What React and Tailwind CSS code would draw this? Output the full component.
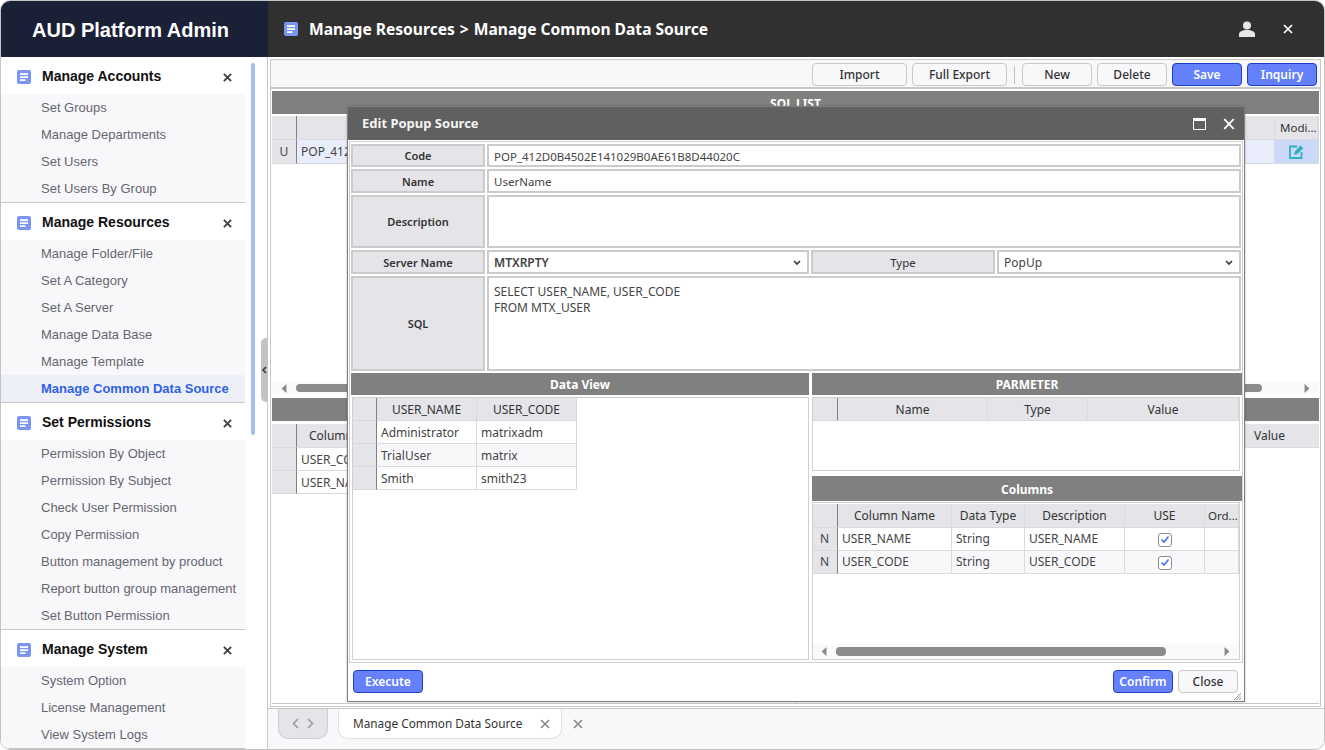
import React from "react";

const menu = [
  { title: "Manage Accounts", items: ["Set Groups", "Manage Departments", "Set Users", "Set Users By Group"] },
  { title: "Manage Resources", items: ["Manage Folder/File", "Set A Category", "Set A Server", "Manage Data Base", "Manage Template", "Manage Common Data Source"] },
  { title: "Set Permissions", items: ["Permission By Object", "Permission By Subject", "Check User Permission", "Copy Permission", "Button management by product", "Report button group management", "Set Button Permission"] },
  { title: "Manage System", items: ["System Option", "License Management", "View System Logs"] },
];

const DocIcon = () => (
  <svg width="14" height="14" viewBox="0 0 14 14" className="shrink-0">
    <rect width="14" height="14" rx="2" fill="#7b96f2" />
    <path d="M3 3.2h8v1.700H3zM3 6.200h8v1.700H3zM3 9.200h5.400v1.700H3z" fill="#fff" />
  </svg>
);

const CloseIcon = ({ size = 9, stroke = 2.2, color = "#444" }) => (
  <svg width={size} height={size} viewBox="0 0 10 10" className="shrink-0">
    <path d="M1 1l8 8M9 1l-8 8" stroke={color} strokeWidth={stroke} fill="none" />
  </svg>
);

const Arrow = ({ right }) => (
  <svg width="6" height="9" viewBox="0 0 6 9">
    <path d={right ? "M0.5 0l5 4.5-5 4.5z" : "M5.5 0l-5 4.5 5 4.5z"} fill="#8a8a8a" />
  </svg>
);

const Chevron = () => (
  <svg width="8" height="5" viewBox="0 0 8 5">
    <path d="M1 1l3 3 3-3" stroke="#333" strokeWidth="1.6" fill="none" />
  </svg>
);

const Check = () => (
  <span className="flex h-[14px] w-[14px] items-center justify-center rounded-[3px] border border-[#8d8d8d] bg-white">
    <svg width="10" height="9" viewBox="0 0 10 9">
      <path d="M1.5 4.5l2.5 2.5 4.5-5.5" stroke="#4a6cf0" strokeWidth="1.6" fill="none" />
    </svg>
  </span>
);

const Btn = ({ children, primary, className }) => (
  <button
    className={
      "flex h-[23px] items-center justify-center rounded-[4px] border pt-[1px] text-[12px] font-medium leading-none " +
      (primary
        ? "border-[#1f3fc4] bg-[#6580fb] font-semibold text-white "
        : "border-[#c8c8c8] bg-[#f8f8fb] text-[#333] ") +
      className
    }
  >
    {children}
  </button>
);

const Bar = ({ children, className }) => (
  <div className={"flex items-center justify-center bg-[#808080] text-[12px] font-bold text-white " + className}>
    {children}
  </div>
);

const Head = ({ children, className }) => (
  <div className={"flex items-center justify-center overflow-hidden whitespace-nowrap border-r border-b border-[#d9d9de] bg-[#e4e4e9] pt-[1px] text-[12px] text-[#333] " + className}>
    {children}
  </div>
);

const Num = ({ children, className }) => (
  <div className={"flex items-center justify-center border-r border-b border-b-[#d9d9de] border-r-[#808080] bg-[#e4e4e9] pt-[1px] text-[12px] text-[#444] " + className}>
    {children}
  </div>
);

const Cell = ({ children, className }) => (
  <div className={"flex items-center overflow-hidden whitespace-nowrap border-r border-b border-[#d9d9de] px-[4px] pt-[1px] text-[12px] text-[#444] " + className}>
    {children}
  </div>
);

const Label = ({ children, className }) => (
  <div className={"flex shrink-0 items-center justify-center border-2 border-[#cbcbcb] bg-[#e4e4e9] pt-[2px] text-[11px] font-semibold text-[#333] " + className}>
    {children}
  </div>
);

const Field = ({ children, className }) => (
  <div className={"flex border-2 border-[#cbcbcb] bg-white px-[5px] text-[12px] text-[#444] " + className}>
    {children}
  </div>
);

const Sidebar = () => (
  <aside className="relative flex min-h-0 flex-1 border-r border-[#c8c8c8] bg-white font-['Liberation_Sans',Arial,sans-serif]">
    <nav className="w-[244px] shrink-0">
      {menu.map((group) => (
        <div key={group.title} className="border-b border-[#c8c8c8] bg-[#f8f8fb]">
          <div className="flex h-[37px] items-center bg-white pl-[16px] pr-[13px] pt-[3px] text-[14px] font-bold text-[#111]">
            <DocIcon />
            <span className="mb-[2px] ml-[11px] flex-1">{group.title}</span>
            <CloseIcon />
          </div>
          {group.items.map((item) => (
            <div
              key={item}
              className={
                "flex h-[27px] items-center whitespace-nowrap pl-[40px] text-[13px] " +
                (item === "Manage Common Data Source" ? "bg-[#eef0f8] font-bold text-[#2f62e6]" : "text-[#666670]")
              }
            >
              {item}
            </div>
          ))}
        </div>
      ))}
    </nav>
    <div className="ml-[6px] mt-[6px] h-[372px] w-[4px] rounded-[2px] bg-[#a3bbf8]" />
    <div className="absolute right-[-1px] top-[281px] flex h-[64px] w-[7px] items-center justify-center rounded-l-[5px] bg-[#c4c4c4]">
      <svg width="5" height="8" viewBox="0 0 5 8">
        <path d="M4 1L1 4l3 3" stroke="#333" strokeWidth="1.5" fill="none" />
      </svg>
    </div>
  </aside>
);

const Background = () => (
  <div className="min-h-0 flex-1 pl-[2px] pr-[3px] pt-[2px]">
    <div className="flex h-[29px] items-end justify-end gap-[5px] border border-[#c8c8c8] bg-[#f8f8fb] pb-[1px] pr-[3px]">
      <Btn className="w-[95px]">Import</Btn>
      <Btn className="w-[95px]">Full Export</Btn>
      <div className="mb-[2px] ml-[2px] h-[18px] w-[1px] bg-[#c0c0c0]" />
      <Btn className="ml-[2px] w-[70px]">New</Btn>
      <Btn className="w-[70px]">Delete</Btn>
      <Btn primary className="w-[70px]">Save</Btn>
      <Btn primary className="w-[70px]">Inquiry</Btn>
    </div>
    <div className="h-[619px] overflow-hidden border border-[#c8c8c8] bg-white px-[1px] pt-[2px]">
      <div className="flex h-[307px] flex-col">
        <Bar className="h-[23px] pt-[3px]">SQL LIST</Bar>
        <div className="mt-[2px] flex h-[48px] flex-col border-r border-[#d9d9de]">
          <div className="flex h-[24px] bg-[#e4e4e9]">
            <Num className="h-[24px] w-[25px]" />
            <Head className="flex-1" />
            <Head className="w-[43px] !justify-start pl-[5px] !text-[11.5px]">Modi...</Head>
          </div>
          <div className="flex h-[24px] bg-[#e9edfb]">
            <Num className="h-[24px] w-[25px]">U</Num>
            <Cell className="flex-1">POP_412</Cell>
            <div className="flex w-[43px] items-center justify-center border-b border-[#d9d9de] bg-[#ccd8f7]">
              <svg width="15" height="14" viewBox="0 0 15 14">
                <path d="M8 1.5H1v11.5h11.5V7" stroke="#2fb0bf" strokeWidth="1.8" fill="none" />
                <path d="M5 9.8l.6-3L11.500.6l2.700 2.600-6 6z" fill="#2fb0bf" />
              </svg>
            </div>
          </div>
        </div>
        <div className="mb-[4px] mt-auto flex h-[12px] items-center bg-[#fafafa] px-[9px]">
          <Arrow />
          <div className="ml-[9px] h-[8px] w-[966px] rounded-[4px] bg-[#8c8c8c]" />
          <div className="ml-auto"><Arrow right /></div>
        </div>
      </div>
      <Bar className="h-[23px]" />
      <div className="mt-[3px] flex h-[280px] border-b border-[#c8c8c8]">
        <div className="w-[525px] border-r border-[#c8c8c8]">
          <div className="flex h-[24px]">
            <Num className="w-[25px]" />
            <Head className="w-[106px]">Column Name</Head>
            <Head className="flex-1" />
          </div>
          {["USER_CODE", "USER_NAME"].map((v) => (
            <div key={v} className="flex h-[23px]">
              <Num className="w-[25px]" />
              <Cell className="w-[106px]">{v}</Cell>
            </div>
          ))}
        </div>
        <div className="ml-auto flex h-[24px] w-[76px] items-center border-b border-[#d9d9de] bg-[#e4e4e9] pl-[11px] pt-[1px] text-[12px] text-[#333]">
          Value
        </div>
      </div>
    </div>
  </div>
);

const Dialog = () => (
  <div className="absolute left-[346px] top-[105px] flex h-[596px] w-[898px] flex-col border border-[#7f7f7f] bg-white shadow-[0_0_2px_rgba(0,0,0,0.3)]">
    <div className="flex h-[33px] shrink-0 items-center bg-[#606060] pl-[14px] pr-[9px] text-[13px] font-bold text-[#f4f4f4]">
      <span className="flex-1">Edit Popup Source</span>
      <svg width="13" height="12" viewBox="0 0 13 12" className="mr-[17px]">
        <path d="M.5.5h12v11H.5z" stroke="#fff" fill="none" />
        <path d="M0 0h13v3H0z" fill="#fff" />
      </svg>
      <CloseIcon size={12} stroke={1.5} color="#fff" />
    </div>
    <div className="mx-[1px] mt-[1px] flex h-[522px] flex-col gap-[2px] border border-[#d0d0d0] pl-[1px] pt-[2px]">
      <div className="flex h-[23px] gap-[2px] pr-[1px]">
        <Label className="w-[134px]">Code</Label>
        <Field className="flex-1 items-center pt-[2px] !text-[11.5px]">POP_412D0B4502E141029B0AE61B8D44020C</Field>
      </div>
      <div className="flex h-[24px] gap-[2px] pr-[1px]">
        <Label className="w-[134px]">Name</Label>
        <Field className="flex-1 items-center pt-[1px] !text-[11.5px]">UserName</Field>
      </div>
      <div className="flex h-[53px] gap-[2px] pr-[1px]">
        <Label className="w-[134px]">Description</Label>
        <Field className="flex-1" />
      </div>
      <div className="flex h-[24px] gap-[2px] pr-[1px]">
        <Label className="w-[134px]">Server Name</Label>
        <Field className="w-[322px] items-center justify-between pr-[6px] pt-[1px] font-semibold text-[#333]">
          MTXRPTY <Chevron />
        </Field>
        <Label className="w-[184px] !pt-[1px] !text-[11.5px] !font-normal">Type</Label>
        <Field className="flex-1 items-center justify-between pr-[6px] pt-[1px]">
          PopUp <Chevron />
        </Field>
      </div>
      <div className="flex h-[95px] gap-[2px] pr-[1px]">
        <Label className="w-[134px]">SQL</Label>
        <Field className="flex-1 flex-col pt-[6px] leading-[16px]">
          <div>SELECT USER_NAME, USER_CODE</div>
          <div>FROM MTX_USER</div>
        </Field>
      </div>
      <div className="flex min-h-0 flex-1 gap-[3px]">
        <div className="flex w-[458px] flex-col">
          <Bar className="h-[22px] shrink-0 pt-[1px]">Data View</Bar>
          <div className="ml-[1px] mt-[2px] h-[263px] border border-[#d0d0d0] bg-white">
            <div className="grid w-[224px] grid-cols-[24px_100px_100px] auto-rows-[23px]">
              <Num />
              <Head>USER_NAME</Head>
              <Head>USER_CODE</Head>
              <Num />
              <Cell>Administrator</Cell>
              <Cell>matrixadm</Cell>
              <Num />
              <Cell className="bg-[#f8f8fb]">TrialUser</Cell>
              <Cell className="bg-[#f8f8fb]">matrix</Cell>
              <Num />
              <Cell>Smith</Cell>
              <Cell>smith23</Cell>
            </div>
          </div>
        </div>
        <div className="flex w-[430px] flex-col">
          <Bar className="h-[22px] shrink-0 pt-[1px]">PARMETER</Bar>
          <div className="mr-[2px] mt-[2px] h-[74px] shrink-0 border border-[#d0d0d0]">
            <div className="grid grid-cols-[25px_150px_100px_1fr] auto-rows-[23px]">
              <Num />
              <Head>Name</Head>
              <Head>Type</Head>
              <Head>Value</Head>
            </div>
          </div>
          <Bar className="mt-[5px] h-[25px] shrink-0 pt-[2px]">Columns</Bar>
          <div className="relative mr-[2px] mt-[1px] h-[158px] border border-[#d0d0d0] pt-[1px]">
            <div className="grid grid-cols-[25px_114px_73px_100px_80px_1fr] grid-rows-[24px_23px_23px]">
              <Num />
              <Head>Column Name</Head>
              <Head>Data Type</Head>
              <Head>Description</Head>
              <Head>USE</Head>
              <Head className="!justify-start pl-[3px] !text-[11.5px]">Ord...</Head>
              <Num className="!pt-0 pr-[1px]">N</Num>
              <Cell className="!pt-0">USER_NAME</Cell>
              <Cell className="!pt-0">String</Cell>
              <Cell className="!pt-0">USER_NAME</Cell>
              <Cell className="justify-center"><Check /></Cell>
              <Cell />
              <Num className="!pt-0 pr-[1px]">N</Num>
              <Cell className="bg-[#f8f8fb] !pt-0">USER_CODE</Cell>
              <Cell className="bg-[#f8f8fb] !pt-0">String</Cell>
              <Cell className="bg-[#f8f8fb] !pt-0">USER_CODE</Cell>
              <Cell className="justify-center bg-[#f8f8fb]"><Check /></Cell>
              <Cell className="bg-[#f8f8fb]" />
            </div>
            <div className="absolute bottom-0 left-0 right-0 flex h-[15px] items-center bg-[#fafafa] pl-[8px] pr-[9px]">
              <Arrow />
              <div className="ml-[9px] h-[9px] w-[330px] rounded-[4px] bg-[#8c8c8c]" />
              <div className="ml-auto"><Arrow right /></div>
            </div>
          </div>
        </div>
      </div>
    </div>
    <div className="relative flex flex-1 items-start pl-[5px] pr-[6px] pt-[7px]">
      <Btn primary className="w-[70px]">Execute</Btn>
      <Btn primary className="ml-auto w-[60px]">Confirm</Btn>
      <Btn className="ml-[5px] w-[60px]">Close</Btn>
      <svg width="7" height="7" viewBox="0 0 7 7" className="absolute bottom-[1px] right-[3px]">
        <path d="M7 0L0 7M7 2.5L2.5 7M7 5L5 7" stroke="#777" strokeWidth="0.8" />
      </svg>
    </div>
  </div>
);

const App = () => (
  <div className="relative flex h-[750px] w-[1325px] overflow-hidden rounded-[10px] border border-[#c4c4c4] bg-white font-['Noto_Sans',sans-serif]">
    <div className="flex w-[267px] shrink-0 flex-col">
      <div className="flex h-[56px] shrink-0 items-center bg-[#1a2035] pl-[31px] pt-[2px] font-['Liberation_Sans',Arial,sans-serif] text-[20px] font-bold text-white">
        AUD Platform Admin
      </div>
      <Sidebar />
    </div>
    <div className="flex min-w-0 flex-1 flex-col">
      <div className="flex h-[56px] shrink-0 items-center bg-[#303030] pl-[16px] pr-[31px] text-white">
        <DocIcon />
        <span className="ml-[11px] flex-1 whitespace-pre pt-[2px] text-[15.6px] font-bold">
          Manage Resources<span className="mx-[5px]">&gt;</span>Manage Common Data Source
        </span>
        <svg width="16" height="16" viewBox="0 0 16 16" className="mr-[28px]">
          <circle cx="8" cy="4.5" r="4" fill="#e8e8e8" />
          <path d="M0 16v-2.500C0 10.500 3 9 8 9s8 1.500 8 4.500V16z" fill="#e8e8e8" />
        </svg>
        <CloseIcon size={10} stroke={1.7} color="#fff" />
      </div>
      <Background />
      <div className="flex h-[41px] shrink-0 items-start border-t border-[#c8c8c8] bg-[#f8f8fb] pl-[10px]">
        <div className="flex h-[30px] w-[50px] items-center justify-center gap-[8px] rounded-b-[10px] border border-t-0 border-[#cfcfd4] bg-[#e4e4e9]">
          <svg width="7" height="11" viewBox="0 0 7 11"><path d="M6 1L1.500 5.500 6 10" stroke="#999" strokeWidth="1.5" fill="none" /></svg>
          <svg width="7" height="11" viewBox="0 0 7 11"><path d="M1 1l4.500 4.500L1 10" stroke="#999" strokeWidth="1.5" fill="none" /></svg>
        </div>
        <div className="ml-[10px] flex h-[30px] w-[224px] items-center justify-between rounded-b-[10px] border border-t-0 border-[#e0e0e4] bg-white pl-[14px] pr-[11px] pt-[1px] text-[11.8px] text-[#333]">
          Manage Common Data Source
          <CloseIcon size={10} stroke={1.6} color="#888" />
        </div>
        <div className="ml-[11px] flex h-[30px] items-center"><CloseIcon size={10} stroke={1.6} color="#888" /></div>
      </div>
    </div>
    <Dialog />
  </div>
);

export default App;
